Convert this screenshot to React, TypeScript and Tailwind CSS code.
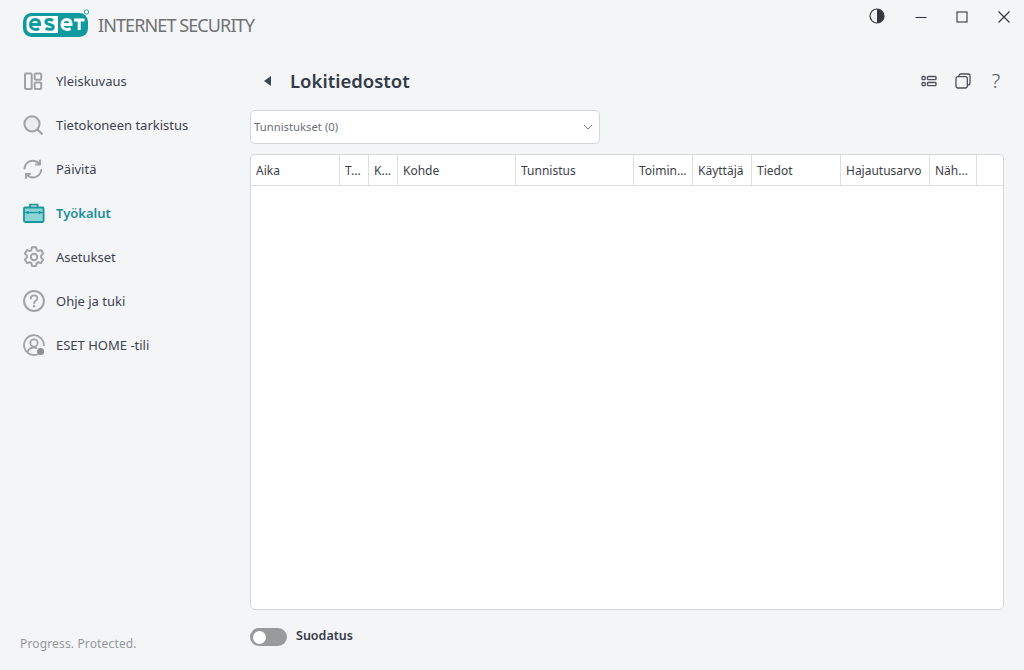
import React from "react";

function Logo() {
  return (
    <svg width="68" height="29" viewBox="0 0 68 29" className="shrink-0">
      <rect x="1" y="4" width="65" height="24" rx="8.500" fill="#0f9aa0" />
      <path d="M10 7h26v17H10a5.500 5.500 0 0 1-5.500-5.500v-6A5.500 5.500 0 0 1 10 7z" fill="#fff" />
      <g fill="none" stroke="#0f9aa0" strokeWidth="3">
        <path d="M8.500 15.500h9c0-3-1.700-4.900-4.400-4.900s-4.600 2-4.600 4.900 1.900 4.900 4.800 4.900c1.500 0 2.900-.4 3.800-1" />
        <path d="M31 11.500c-.9-.6-2.300-.9-3.700-.9-2.100 0-3.400.8-3.400 2.400 0 3.300 7.400 1.600 7.400 4.900 0 1.600-1.500 2.400-3.700 2.400-1.600 0-3-.4-3.900-1" />
      </g>
      <g fill="none" stroke="#fff" strokeWidth="3">
        <path d="M40 15.500h9c0-3-1.700-4.900-4.400-4.900s-4.600 2-4.600 4.900 1.900 4.900 4.800 4.900c1.500 0 2.900-.4 3.800-1" />
        <path d="M52 11h10.500M57.200 11v10" />
      </g>
      <circle cx="64.500" cy="3" r="2.200" fill="none" stroke="#0f9aa0" strokeWidth="0.900" />
    </svg>
  );
}

const gray = "#a3a3a3";

function IconOverview() {
  return (
    <svg width="20" height="20" viewBox="0 0 20 20" fill="none" stroke={gray} strokeWidth="2">
      <rect x="2" y="2.400" width="6.700" height="15.700" rx="1" />
      <rect x="11.700" y="2.400" width="6.500" height="6.300" rx="1" />
      <rect x="11.700" y="11.500" width="6.500" height="6.500" rx="1" />
    </svg>
  );
}
function IconSearch() {
  return (
    <svg width="20" height="20" viewBox="0 0 20 20" fill="none">
      <circle cx="9" cy="8.800" r="7.600" fill="#ebeced" stroke={gray} strokeWidth="2" />
      <path d="M14.600 14.600l4.200 4.200" stroke={gray} strokeWidth="2.200" strokeLinecap="round" />
    </svg>
  );
}
function IconRefresh() {
  return (
    <svg width="20" height="20" viewBox="0 0 20 20" fill="none" stroke={gray} strokeWidth="2" strokeLinecap="round" strokeLinejoin="round">
      <path d="M1.500 9.500C1.800 5 5.300 1.800 9.800 1.800c2.800 0 5 1.200 6.600 3.300" />
      <path d="M17 1.600v4h-4" />
      <path d="M18.300 11c-.4 4.300-3.900 7.400-8.300 7.400-2.800 0-5-1.100-6.500-3.200" />
      <path d="M3 19v-4h4" />
    </svg>
  );
}
function IconTools() {
  return (
    <svg width="22" height="20" viewBox="0 0 22 20" fill="none">
      <rect x="1" y="4.500" width="19.600" height="14.500" rx="1.200" fill="#8cd3d6" stroke="#1a969c" strokeWidth="1.800" />
      <path d="M1 9.500h19.600" stroke="#1a969c" strokeWidth="1.400" />
      <path d="M7 4.500V1.600h7.600v2.900" stroke="#1a969c" strokeWidth="1.800" />
      <path d="M5 8v3M16.600 8v3" stroke="#1a969c" strokeWidth="1.400" />
    </svg>
  );
}
function IconGear() {
  return (
    <svg width="22" height="22" viewBox="0 0 22 22" fill="none" stroke={gray} strokeWidth="2" strokeLinejoin="round">
      <path d="M9 1.300h4l.7 2.800 1.700.9 2.700-.9 2 3.500-2 2 .1 1-.1 1 2 2-2 3.500-2.700-.9-1.700.9-.7 2.800H9l-.7-2.800-1.700-.9-2.700.9-2-3.500 2-2-.1-1 .1-1-2-2 2-3.500 2.700.9 1.700-.9z" />
      <circle cx="11" cy="11" r="3.200" />
    </svg>
  );
}
function IconHelp() {
  return (
    <svg width="22" height="22" viewBox="0 0 22 22" fill="none" stroke={gray}>
      <circle cx="11" cy="11" r="9.900" strokeWidth="2" />
      <path d="M7.800 8.500c0-2 1.400-3.200 3.300-3.200s3.200 1.200 3.200 2.900c0 2.600-3.200 2.600-3.200 5.100" strokeWidth="1.800" strokeLinecap="round" />
      <circle cx="11.100" cy="16.200" r="1.200" fill={gray} stroke="none" />
    </svg>
  );
}
function IconUser() {
  return (
    <svg width="22" height="22" viewBox="0 0 22 22" fill="none" stroke={gray}>
      <path d="M15.800 19.700A9.900 9.900 0 1 1 20.800 12" strokeWidth="1.800" />
      <circle cx="11" cy="9" r="3.700" strokeWidth="1.800" />
      <path d="M4.800 18c.5-2.800 2.700-4.300 6.200-4.300 1.300 0 2.400.2 3.200.6" strokeWidth="1.800" />
      <circle cx="17.600" cy="17.600" r="3.500" fill="#8f8f8f" stroke="none" />
    </svg>
  );
}

function Nav({ icon, label, active }: { icon: React.ReactNode; label: string; active?: boolean }) {
  return (
    <div className="flex h-[44px] items-center pl-[23px]">
      <div className="flex w-[33px] items-center">{icon}</div>
      <span className={active ? "text-[13px] font-semibold leading-[20px] text-[#1a8f96]" : "text-[13px] leading-[20px] text-[#3c4250]"}>{label}</span>
    </div>
  );
}

const columns: [string, string][] = [
  ["Aika", "w-[89px]"],
  ["T...", "w-[29px]"],
  ["K...", "w-[29px]"],
  ["Kohde", "w-[118px]"],
  ["Tunnistus", "w-[118px]"],
  ["Toimin...", "w-[59px]"],
  ["Käyttäjä", "w-[59px]"],
  ["Tiedot", "w-[89px]"],
  ["Hajautusarvo", "w-[89px]"],
  ["Näh...", "w-[47px]"],
];

export default function App() {
  return (
    <div className="flex h-[670px] w-[1024px] overflow-hidden bg-[#f4f5f7] font-['Noto_Sans',sans-serif]">
      <aside className="flex w-[250px] shrink-0 flex-col">
        <div className="flex h-[59px] items-start pl-[22px] pt-[9px]">
          <Logo />
          <span className="ml-[8px] mt-[4px] whitespace-nowrap text-[18px] leading-[24px] tracking-[-0.9px] text-[#6f7173]">INTERNET SECURITY</span>
        </div>
        <nav className="flex flex-col">
          <Nav icon={<IconOverview />} label="Yleiskuvaus" />
          <Nav icon={<IconSearch />} label="Tietokoneen tarkistus" />
          <Nav icon={<IconRefresh />} label="Päivitä" />
          <Nav icon={<IconTools />} label="Työkalut" active />
          <Nav icon={<IconGear />} label="Asetukset" />
          <Nav icon={<IconHelp />} label="Ohje ja tuki" />
          <Nav icon={<IconUser />} label="ESET HOME -tili" />
        </nav>
        <div className="mt-auto pb-[17px] pl-[20px] text-[12px] leading-[18px] tracking-[0.15px] text-[#94979b]">Progress. Protected.</div>
      </aside>
      <main className="flex min-w-0 flex-1 flex-col pr-[20px]">
        <div className="flex h-[59px] items-start justify-end">
          <div className="flex items-center pt-[8px]">
            <svg width="16" height="16" viewBox="0 0 16 16" className="mr-[30px]">
              <circle cx="8" cy="8" r="7" fill="none" stroke="#33373d" strokeWidth="1.200" />
              <path d="M8 1a7 7 0 0 1 0 14z" fill="#33373d" />
            </svg>
            <svg width="12" height="12" viewBox="0 0 12 12" className="mr-[29px] mt-[2px]">
              <path d="M0.500 6.500h11" stroke="#33373d" strokeWidth="1.100" />
            </svg>
            <svg width="12" height="12" viewBox="0 0 12 12" className="mr-[29px] mt-[2px]">
              <rect x="1" y="1" width="10" height="10" fill="none" stroke="#33373d" strokeWidth="1.100" />
            </svg>
            <svg width="14" height="14" viewBox="0 0 14 14" className="mr-[-7px] mt-[2px]">
              <path d="M1.500 1.500l11 11M12.500 1.500l-11 11" stroke="#33373d" strokeWidth="1.200" />
            </svg>
          </div>
        </div>
        <div className="flex h-[44px] items-center">
          <svg width="10" height="12" viewBox="0 0 10 12" className="ml-[13px] shrink-0">
            <path d="M8 1v10L1 6z" fill="#3a4550" />
          </svg>
          <h1 className="ml-[17px] text-[18.500px] font-semibold leading-[26px] text-[#333a48]">Lokitiedostot</h1>
          <div className="ml-auto flex items-center">
            <svg width="16" height="12" viewBox="0 0 16 12" className="mr-[18px]" fill="none" stroke="#4a5058" strokeWidth="1.300">
              <rect x="1" y="1.500" width="3.200" height="3.200" rx="1" />
              <rect x="1" y="7.500" width="3.200" height="3.200" rx="1" />
              <rect x="6.500" y="1.500" width="8.500" height="3.200" rx="0.800" />
              <rect x="6.500" y="7.500" width="8.500" height="3.200" rx="0.800" />
            </svg>
            <svg width="16" height="16" viewBox="0 0 16 16" className="mr-[18px]" fill="none" stroke="#4a5058" strokeWidth="1.300">
              <rect x="1" y="3.700" width="11.300" height="11.300" rx="1.800" />
              <path d="M4 3.600V2.800C4 1.800 4.800 1 5.800 1h7.400c1 0 1.800.8 1.800 1.800v7.400c0 1-.8 1.800-1.800 1.800h-.8" />
            </svg>
            <span className="mr-[1px] w-[14px] text-center text-[20px] font-light leading-[20px] text-[#50545a]">?</span>
          </div>
        </div>
        <div className="mt-[7px] flex h-[34px] w-[350px] items-center justify-between rounded-[5px] border border-[#d5d6d8] bg-white pl-[3px] pr-[6px]">
          <span className="mt-[1px] text-[11.300px] text-[#6b6f78]">Tunnistukset (0)</span>
          <svg width="10" height="6" viewBox="0 0 10 6" fill="none" stroke="#7a7d82" strokeWidth="1">
            <path d="M1 1l4 4 4-4" />
          </svg>
        </div>
        <div className="mt-[10px] flex h-[456px] flex-col overflow-hidden rounded-[5px] border border-[#d5d6d8] bg-white">
          <div className="flex h-[31px] shrink-0 border-b border-[#dddedf]">
            {columns.map(([name, w]) => (
              <div key={name} className={`${w} flex shrink-0 items-center overflow-hidden whitespace-nowrap border-r border-[#dddedf] pl-[5px] pt-[2px] text-[12px] text-[#3c4048]`}>
                {name}
              </div>
            ))}
          </div>
        </div>
        <div className="mt-[18px] flex items-center">
          <div className="flex h-[18px] w-[37px] items-center rounded-full bg-[#999a9c] pl-[3px]">
            <div className="h-[13px] w-[13px] rounded-full bg-white" />
          </div>
          <span className="ml-[9px] mt-[-3px] text-[12.500px] font-semibold leading-[18px] text-[#333a48]">Suodatus</span>
        </div>
      </main>
    </div>
  );
}
